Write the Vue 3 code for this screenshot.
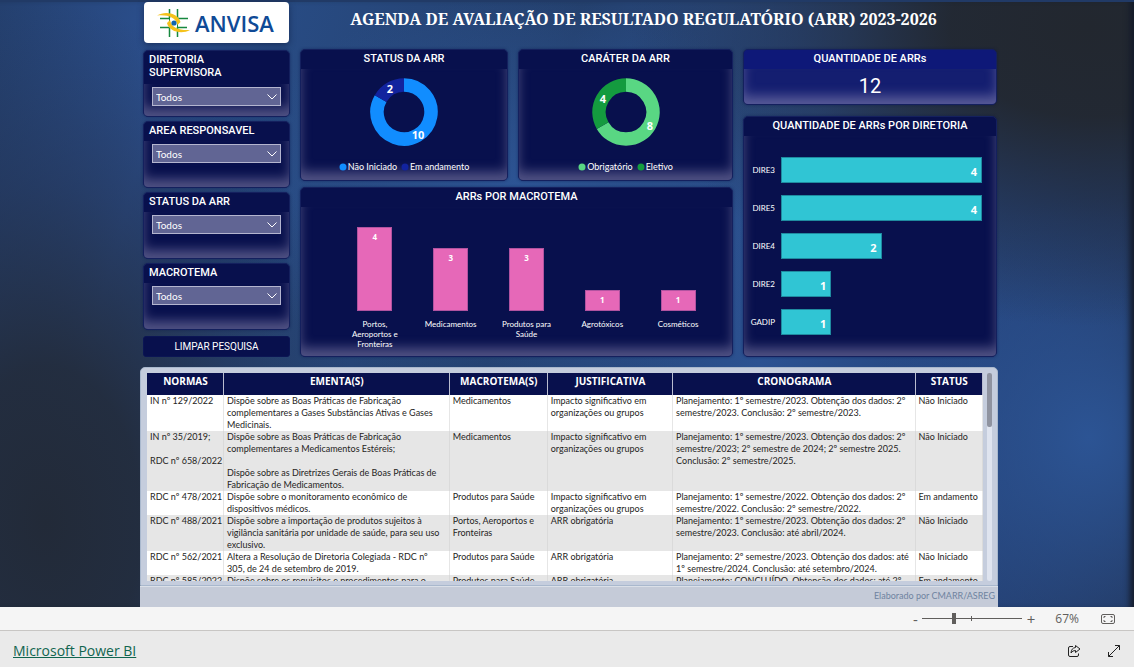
<script setup>
import { ref } from 'vue'

const filters = [
  { id: 'diretoria', label: 'DIRETORIA SUPERVISORA', tall: true },
  { id: 'area', label: 'AREA RESPONSAVEL' },
  { id: 'status', label: 'STATUS DA ARR' },
  { id: 'macrotema', label: 'MACROTEMA' }
]
const selected = ref({ diretoria: 'Todos', area: 'Todos', status: 'Todos', macrotema: 'Todos' })
const zoom = ref(31)

function clearFilters() {
  filters.forEach((f) => (selected.value[f.id] = 'Todos'))
}

const donuts = [
  {
    title: 'STATUS DA ARR',
    slices: [
      { name: 'Não Iniciado', value: 10, color: '#118dff', x: 48, y: 61 },
      { name: 'Em andamento', value: 2, color: '#12239e', x: 20, y: 15 }
    ]
  },
  {
    title: 'CARÁTER DA ARR',
    slices: [
      { name: 'Obrigatório', value: 8, color: '#59d783', x: 58, y: 52 },
      { name: 'Eletivo', value: 4, color: '#149b3f', x: 11, y: 25 }
    ]
  }
]

function arc(slices, index) {
  const total = slices.reduce((s, x) => s + x.value, 0)
  const before = slices.slice(0, index).reduce((s, x) => s + x.value, 0)
  const point = (v) => {
    const a = (v / total) * Math.PI * 2 - Math.PI / 2
    return `${34 + 27 * Math.cos(a)} ${34 + 27 * Math.sin(a)}`
  }
  const large = slices[index].value / total > 0.5 ? 1 : 0
  return `M${point(before)}A27 27 0 ${large} 1 ${point(before + slices[index].value)}`
}

const themes = [
  { name: 'Portos, Aeroportos e Fronteiras', value: 4 },
  { name: 'Medicamentos', value: 3 },
  { name: 'Produtos para Saúde', value: 3 },
  { name: 'Agrotóxicos', value: 1 },
  { name: 'Cosméticos', value: 1 }
]
const boards = [
  { name: 'DIRE3', value: 4 },
  { name: 'DIRE5', value: 4 },
  { name: 'DIRE4', value: 2 },
  { name: 'DIRE2', value: 1 },
  { name: 'GADIP', value: 1 }
]

const columns = ['NORMAS', 'EMENTA(S)', 'MACROTEMA(S)', 'JUSTIFICATIVA', 'CRONOGRAMA', 'STATUS']
const rows = [
  [
    'IN nº 129/2022',
    'Dispõe sobre as Boas Práticas de Fabricação\ncomplementares a Gases Substâncias Ativas e Gases\nMedicinais.',
    'Medicamentos',
    'Impacto significativo em\norganizações ou grupos',
    'Planejamento: 1º semestre/2023. Obtenção dos dados: 2º\nsemestre/2023. Conclusão: 2º semestre/2023.',
    'Não Iniciado'
  ],
  [
    'IN nº 35/2019;\n\nRDC nº 658/2022',
    'Dispõe sobre as Boas Práticas de Fabricação\ncomplementares a Medicamentos Estéreis;\n\nDispõe sobre as Diretrizes Gerais de Boas Práticas de\nFabricação de Medicamentos.',
    'Medicamentos',
    'Impacto significativo em\norganizações ou grupos',
    'Planejamento: 1º semestre/2023. Obtenção dos dados: 2º\nsemestre/2023; 2º semestre de 2024; 2º semestre 2025.\nConclusão: 2º semestre/2025.',
    'Não Iniciado'
  ],
  [
    'RDC nº 478/2021',
    'Dispõe sobre o monitoramento econômico de\ndispositivos médicos.',
    'Produtos para Saúde',
    'Impacto significativo em\norganizações ou grupos',
    'Planejamento: 1º semestre/2022. Obtenção dos dados: 2º\nsemestre/2022. Conclusão: 2º semestre/2022.',
    'Em andamento'
  ],
  [
    'RDC nº 488/2021',
    'Dispõe sobre a importação de produtos sujeitos à\nvigilância sanitária por unidade de saúde, para seu uso\nexclusivo.',
    'Portos, Aeroportos e\nFronteiras',
    'ARR obrigatória',
    'Planejamento: 1º semestre/2023. Obtenção dos dados: 2º\nsemestre/2023. Conclusão: até abril/2024.',
    'Não Iniciado'
  ],
  [
    'RDC nº 562/2021',
    'Altera a Resolução de Diretoria Colegiada - RDC nº\n305, de 24 de setembro de 2019.',
    'Produtos para Saúde',
    'ARR obrigatória',
    'Planejamento: 2º semestre/2023. Obtenção dos dados: até\n1º semestre/2024. Conclusão: até setembro/2024.',
    'Não Iniciado'
  ],
  [
    'RDC nº 585/2022',
    'Dispõe sobre os requisitos e procedimentos para o',
    'Produtos para Saúde',
    'ARR obrigatória',
    'Planejamento: CONCLUÍDO. Obtenção dos dados: até 2º',
    'Em andamento'
  ]
]
</script>

<template>
  <div class="app">
    <main class="stage">
      <div class="report">
        <header class="top">
          <div class="logo">
            <svg class="mark" viewBox="0 0 34 30" aria-hidden="true">
              <g stroke="#17883f" stroke-width="1.5" fill="none">
                <path d="M12.5 1V10M20.500 1V10M12.500 19V29M20.500 19V29M3 10.500H13M20 10.500H31M3 19.500H13M20 19.500H30" />
                <path d="M12.500 10V19.500M20.500 10V19.500" stroke-width="1" />
              </g>
              <path d="M0 7.500C8 2.500 21 5 23.500 14L20.500 17C19 9.500 11 6.500 0 7.500Z" fill="#f5c21b" />
              <path d="M33 22C25 26.500 12 24 10 15L13 12C14.500 20 22 22.500 33 22Z" fill="#f5c21b" />
              <circle cx="17" cy="15" r="2.600" fill="#1265ad" />
            </svg>
            <span class="brand">ANVISA</span>
          </div>
          <h1>AGENDA DE AVALIAÇÃO DE RESULTADO REGULATÓRIO (ARR) 2023-2026</h1>
        </header>

        <div class="board">
          <aside class="filters">
            <section v-for="f in filters" :key="f.id" class="card filter" :class="{ tall: f.tall }">
              <label :for="f.id">{{ f.label }}</label>
              <div class="glow">
                <div class="picker">
                  <select :id="f.id" v-model="selected[f.id]">
                    <option>Todos</option>
                  </select>
                  <svg viewBox="0 0 10 6" aria-hidden="true"><path d="M.5 .5L5 5L9.500 .5" /></svg>
                </div>
              </div>
            </section>
            <button class="clear" type="button" @click="clearFilters">LIMPAR PESQUISA</button>
          </aside>

          <div class="middle">
            <div class="pair">
              <section v-for="d in donuts" :key="d.title" class="card">
                <h2>{{ d.title }}</h2>
                <div class="glow donut">
                  <svg viewBox="0 0 68 68" role="img" :aria-label="d.title">
                    <path v-for="(s, i) in d.slices" :key="s.name" :d="arc(d.slices, i)" :stroke="s.color" />
                    <text v-for="s in d.slices" :key="s.value" :x="s.x" :y="s.y">{{ s.value }}</text>
                  </svg>
                  <ul class="legend">
                    <li v-for="s in d.slices" :key="s.name">
                      <svg viewBox="0 0 8 8" aria-hidden="true"><circle cx="4" cy="4" r="3.500" :fill="s.color" /></svg>{{ s.name }}
                    </li>
                  </ul>
                </div>
              </section>
            </div>
            <section class="card themes">
              <h2>ARRs POR MACROTEMA</h2>
              <div class="glow columns">
                <div v-for="t in themes" :key="t.name" class="column">
                  <div class="plot">
                    <div class="bar" :style="{ height: t.value * 25 + '%' }">{{ t.value }}</div>
                  </div>
                  <span>{{ t.name }}</span>
                </div>
              </div>
            </section>
          </div>

          <div class="right">
            <section class="card total">
              <h2>QUANTIDADE DE ARRs</h2>
              <div class="glow number">12</div>
            </section>
            <section class="card boards">
              <h2>QUANTIDADE DE ARRs POR DIRETORIA</h2>
              <div class="glow bars">
                <div v-for="b in boards" :key="b.name" class="line">
                  <span>{{ b.name }}</span>
                  <div class="track">
                    <div class="hbar" :style="{ width: b.value * 25 + '%' }">{{ b.value }}</div>
                  </div>
                </div>
              </div>
            </section>
          </div>
        </div>

        <section class="panel">
          <div class="view">
            <table>
              <colgroup>
                <col v-for="(c, i) in columns" :key="c" :class="'c' + i" />
              </colgroup>
              <thead>
                <tr><th v-for="c in columns" :key="c" scope="col">{{ c }}</th></tr>
              </thead>
              <tbody>
                <tr v-for="r in rows" :key="r[0]">
                  <td v-for="(cell, i) in r" :key="i">{{ cell }}</td>
                </tr>
              </tbody>
            </table>
          </div>
          <div class="rail"><div class="thumb"></div></div>
        </section>
        <p class="credit">Elaborado por CMARR/ASREG</p>
      </div>
    </main>

    <div class="zoombar">
      <button type="button" aria-label="Reduzir" @click="zoom--">-</button>
      <input v-model="zoom" type="range" min="0" max="100" aria-label="Zoom" />
      <button type="button" aria-label="Ampliar" @click="zoom++">+</button>
      <span class="percent">67%</span>
      <button class="fit" type="button" aria-label="Ajustar à página">
        <svg viewBox="0 0 14 10"><rect x=".5" y=".5" width="13" height="9" rx="1.500" /><path d="M3 4V2.500H4.500M9.500 2.500H11V4M11 6V7.500H9.500M4.500 7.500H3V6" /></svg>
      </button>
    </div>

    <footer class="foot">
      <a href="#">Microsoft Power BI</a>
      <div class="actions">
        <button type="button" aria-label="Compartilhar">
          <svg viewBox="0 0 14 14"><path d="M6 2.500H3Q1.500 2.500 1.500 4V11Q1.500 12.500 3 12.500H10Q11.500 12.500 11.500 11V9.500M8.500 1.500L13 5L8.500 8.500V6.500Q5.500 6.300 4 9Q4.300 4 8.500 3.500Z" /></svg>
        </button>
        <button type="button" aria-label="Tela cheia">
          <svg viewBox="0 0 14 14"><path d="M1.500 12.500L12.500 1.500M8 1.500H12.500V6M1.500 8V12.500H6" /></svg>
        </button>
      </div>
    </footer>
  </div>
</template>

<style>
body {
  margin: 0;
}
</style>

<style scoped>
* {
  box-sizing: border-box;
}
.app {
  display: flex;
  flex-direction: column;
  height: 100vh;
  font-family: Lato, "Open Sans", sans-serif;
  color: #fff;
}
.stage {
  flex: 1;
  min-height: 0;
  display: grid;
  grid-template-columns: minmax(0, 140fr) minmax(0, 858fr) minmax(0, 136fr);
  border-top: 2px solid #213a66;
  box-shadow: inset -8px 0 6px -4px #141b2a;
  background:
    radial-gradient(ellipse 460px 300px at 96% 4%, #22272f 0%, rgba(34, 39, 47, 0.95) 30%, rgba(34, 45, 66, 0.55) 65%, rgba(34, 45, 66, 0) 100%),
    radial-gradient(ellipse 320px 520px at 4% 86%, #222a38 0%, rgba(34, 42, 56, 0.9) 30%, rgba(34, 46, 72, 0.5) 65%, rgba(34, 46, 72, 0) 100%),
    radial-gradient(ellipse 220px 240px at 96% 72%, #2c5494 0%, rgba(44, 84, 148, 0) 100%),
    radial-gradient(ellipse 300px 200px at 46% 32%, #2d5596 0%, rgba(45, 85, 150, 0) 100%),
    linear-gradient(105deg, #24406f 0%, #2c5191 14%, #284b83 22%, #24406d 45%, #2c5292 66%, #25437a 85%, #22365c 100%);
}
.report {
  grid-column: 2;
  display: flex;
  flex-direction: column;
  min-height: 0;
}
.top {
  display: grid;
  grid-template-columns: minmax(0, 149fr) minmax(0, 709fr);
  height: 47px;
}
.logo {
  display: flex;
  align-items: center;
  height: 41px;
  margin-left: 4px;
  padding-left: 13px;
  gap: 4px;
  border-radius: 4px;
  background: #fff;
  box-shadow: 0 2px 6px rgba(10, 20, 50, 0.5);
}
.mark {
  width: 34px;
  height: 30px;
}
.brand {
  font: 600 22px/30px "Open Sans", sans-serif;
  color: #0f4a96;
}
h1 {
  margin: 0;
  padding-top: 5px;
  text-align: center;
  font: bold 16px/24px "Noto Serif", "Liberation Serif", serif;
  white-space: nowrap;
}
.board {
  display: grid;
  grid-template-columns: minmax(0, 147fr) minmax(0, 433fr) minmax(0, 254fr);
  gap: 9px 10px;
  height: 308px;
  padding: 0 1px 0 3px;
}
.card {
  display: flex;
  flex-direction: column;
  border: 1px solid #14205e;
  border-radius: 5px;
  background: #08104d;
  box-shadow: 0 0 3px rgba(10, 18, 70, 0.5);
  overflow: hidden;
}
.glow {
  flex: 1;
  min-height: 0;
  box-shadow: inset 0 -9px 12px -1px rgba(170, 165, 200, 0.45);
}
h2,
.filter label {
  margin: 0;
  font: 500 11px/13px Roboto, sans-serif;
}
h2 {
  height: 19px;
  padding-top: 2px;
  text-align: center;
}
.filters {
  display: flex;
  flex-direction: column;
  gap: 4px;
  padding-top: 1px;
}
.filter {
  height: 67px;
}
.filter label {
  height: 19px;
  padding: 2px 50px 0 5px;
  white-space: nowrap;
}
.filter.tall label {
  height: 33px;
  white-space: normal;
}
.picker {
  position: relative;
  margin: 3px 8px 0;
}
select {
  display: block;
  width: 100%;
  height: 19px;
  padding: 0 3px;
  appearance: none;
  border: 1px solid #b4b5cf;
  border-radius: 0;
  background: #616594;
  color: #fff;
  font: 10px/16px Lato, sans-serif;
}
.picker svg {
  position: absolute;
  right: 4px;
  top: 7px;
  width: 10px;
  height: 6px;
  fill: none;
  stroke: #fff;
  pointer-events: none;
}
.clear {
  height: 21px;
  margin-top: 2px;
  border: 1px solid #0b1554;
  border-radius: 3px;
  background: #08104d;
  color: #fff;
  font: 10px/16px Roboto, sans-serif;
}
.middle {
  display: flex;
  flex-direction: column;
  gap: 6px;
}
.pair {
  display: grid;
  grid-template-columns: minmax(0, 208fr) minmax(0, 215fr);
  gap: 10px;
  height: 132px;
}
.donut {
  display: flex;
  flex-direction: column;
  align-items: center;
  padding-top: 9px;
}
.donut > svg {
  width: 68px;
  height: 68px;
}
.donut path {
  fill: none;
  stroke-width: 13.500;
}
.donut text {
  fill: #fff;
  font: bold 11px "Open Sans", sans-serif;
  text-anchor: middle;
}
.legend {
  display: flex;
  gap: 4px;
  margin: 14px 0 0;
  padding: 0;
  list-style: none;
  font-size: 9px;
  line-height: 14px;
}
.legend li {
  display: flex;
  align-items: center;
  gap: 1px;
}
.legend svg {
  width: 8px;
  height: 8px;
}
.themes {
  flex: 1;
}
.columns {
  display: grid;
  grid-template-columns: repeat(5, minmax(0, 1fr));
  padding: 20px 16px 0 36px;
}
.column {
  text-align: center;
  font-size: 8px;
  line-height: 10px;
}
.plot {
  display: flex;
  align-items: flex-end;
  justify-content: center;
  height: 84px;
  margin-bottom: 8px;
}
.column span {
  display: block;
  padding: 0 10px;
}
.bar {
  width: 35px;
  padding-top: 4px;
  background: #e668b8;
  border: 1px solid #b153a0;
  font-family: "Open Sans", sans-serif;
  font-weight: bold;
}
.right {
  display: flex;
  flex-direction: column;
  gap: 11px;
}
.total {
  height: 56px;
  background: #141e70;
}
.total h2 {
  background: #0e1878;
}
.number {
  text-align: center;
  font: 20px/34px Roboto, sans-serif;
}
.boards {
  flex: 1;
}
.bars {
  display: flex;
  flex-direction: column;
  gap: 12px;
  padding: 21px 14px 0 5px;
}
.line {
  display: grid;
  grid-template-columns: 26px minmax(0, 1fr);
  gap: 6px;
  align-items: center;
  text-align: right;
  font-size: 8px;
}
.hbar {
  height: 26px;
  padding: 2px 4px 0 0;
  border: 1px solid #1f8ba0;
  background: #30c5d4;
  font-family: "Open Sans", sans-serif;
  font-size: 11px;
  line-height: 24px;
  font-weight: bold;
}
.panel {
  flex: 1;
  min-height: 0;
  display: flex;
  margin-top: 10px;
  padding: 5px 5px 4px 6px;
  border: 1px solid #a9b8cd;
  border-radius: 5px 5px 0 0;
  background: #c5cddd;
}
.view {
  flex: 1;
  overflow: hidden;
}
table {
  width: 100%;
  table-layout: fixed;
  border-collapse: collapse;
  color: #252423;
  font-size: 9px;
  line-height: 12px;
}
.c0 { width: 77px; }
.c1 { width: 27%; }
.c2 { width: 98px; }
.c3 { width: 15%; }
.c4 { width: 29%; }
.c5 { width: auto; }
th {
  height: 22px;
  padding: 0 0 6px;
  background: #08104d;
  color: #fff;
  font: bold 10px/14px "Open Sans", sans-serif;
  box-shadow: inset -1px 0 #b9bcd0;
}
td {
  padding: 0 0 0 3px;
  vertical-align: top;
  white-space: pre;
  background: #fff;
  box-shadow: inset -1px 0 #e6e6e6;
}
tr:nth-child(even) td {
  background: #e6e6e6;
  box-shadow: inset -1px 0 #dadada;
}
.rail {
  width: 5px;
  margin-left: 4px;
  border-radius: 3px;
  background: #dfe4ef;
}
.thumb {
  height: 54px;
  border-radius: 2px;
  background: #8f93a0;
}
.credit {
  margin: 0;
  height: 21px;
  padding: 0 3px 0 0;
  background: #c5cbd8;
  border-top: 1px solid #dbe0e8;
  color: #6f83a0;
  text-align: right;
  font-size: 9px;
  line-height: 18px;
}
.zoombar {
  display: flex;
  align-items: center;
  justify-content: flex-end;
  height: 24px;
  padding-right: 19px;
  border-bottom: 1px solid #c8c6c4;
  background: #f5f5f5;
  color: #605e5c;
  font-family: "Open Sans", sans-serif;
}
.zoombar button,
.actions button {
  padding: 0;
  border: 0;
  background: none;
  color: inherit;
  font: 15px/20px "Open Sans", sans-serif;
}
.zoombar input {
  width: 100px;
  height: 12px;
  margin: 0 5px 0 4px;
  appearance: none;
  background:
    linear-gradient(#605e5c, #605e5c) 50% 50% / 1px 5px no-repeat,
    linear-gradient(#605e5c, #605e5c) 50% 50% / 100% 1px no-repeat;
}
.zoombar input::-webkit-slider-thumb {
  appearance: none;
  width: 4px;
  height: 11px;
  background: #605e5c;
}
.percent {
  margin: 0 22px 0 20px;
  font-size: 12px;
}
.fit,
.actions button {
  display: flex;
}
.fit svg {
  width: 14px;
  height: 10px;
  fill: none;
  stroke: #605e5c;
}
.foot {
  display: flex;
  align-items: center;
  justify-content: space-between;
  height: 36px;
  padding: 3px 13px 0;
  background: #eaeaea;
}
.foot a {
  color: #11654f;
  font: 14px/20px "Open Sans", sans-serif;
}
.actions {
  display: flex;
  gap: 26px;
}
.actions svg {
  width: 14px;
  height: 14px;
  fill: none;
  stroke: #222;
}
</style>
